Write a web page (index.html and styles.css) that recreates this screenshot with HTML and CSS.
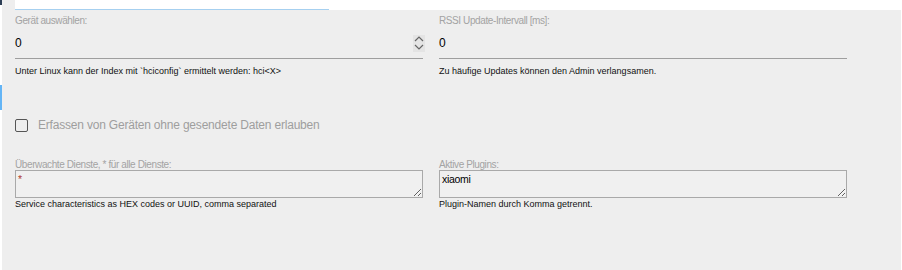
FILE: index.html
```html
<!DOCTYPE html>
<html lang="de">
<head>
    <meta charset="UTF-8">
    <meta name="viewport" content="width=device-width, initial-scale=1.0">
    <title>BLE Einstellungen</title>
    <link rel="stylesheet" href="styles.css">
</head>
<body>
    <div class="edge">
        <span class="edge-top"></span>
        <span class="edge-mark"></span>
    </div>

    <div class="page">
        <div class="prev">
            <span class="prev-pad"></span>
            <span class="prev-input"></span>
        </div>

        <div class="panel">
            <div class="grid">
                <div class="field">
                    <label class="label" for="device">Gerät auswählen:</label>
                    <div class="input">
                        <span class="value">0</span>
                        <span class="spinner">
                            <svg width="10" height="7" viewBox="0 0 10 7"><path d="M1 6 L5 2 L9 6" fill="none" stroke="#666" stroke-width="1.2"/></svg>
                            <svg width="10" height="7" viewBox="0 0 10 7"><path d="M1 1 L5 5 L9 1" fill="none" stroke="#666" stroke-width="1.2"/></svg>
                        </span>
                    </div>
                    <div class="help">Unter Linux kann der Index mit `hciconfig` ermittelt werden: hci&lt;X&gt;</div>
                </div>
                <div class="field">
                    <label class="label" for="rssi">RSSI Update-Intervall [ms]:</label>
                    <div class="input">
                        <span class="value">0</span>
                    </div>
                    <div class="help">Zu häufige Updates können den Admin verlangsamen.</div>
                </div>
            </div>

            <div class="check">
                <span class="box"></span>
                <span class="check-text">Erfassen von Geräten ohne gesendete Daten erlauben</span>
            </div>

            <div class="grid">
                <div class="field">
                    <label class="label small">Überwachte Dienste, * für alle Dienste:</label>
                    <textarea class="area star">*</textarea>
                    <div class="help tight">Service characteristics as HEX codes or UUID, comma separated</div>
                </div>
                <div class="field">
                    <label class="label small">Aktive Plugins:</label>
                    <textarea class="area">xiaomi</textarea>
                    <div class="help tight">Plugin-Namen durch Komma getrennt.</div>
                </div>
            </div>
        </div>
    </div>
</body>
</html>
```

FILE: styles.css
```css
html, body { margin: 0; padding: 0; }
body { display: flex; width: 902px; height: 270px; overflow: hidden; background: #fff; font-family: "Liberation Sans", Arial, sans-serif; }

.edge { width: 2px; display: flex; flex-direction: column; }
.edge-top { height: 5px; background: #2c3e55; }
.edge-mark { height: 25px; margin-top: 80px; background: #64b5f6; }

.page { width: 899px; display: flex; flex-direction: column; }
.prev { display: flex; height: 10px; }
.prev-pad { width: 13px; background: #eeeeee; }
.prev-input { width: 314px; height: 9px; border-bottom: 1px solid #a6d0f0; background: #fff; }

.panel { flex: 1; background: #eeeeee; padding: 4px 0 0 13px; }
.grid { display: grid; grid-template-columns: 408px 408px; column-gap: 16px; }
.field { display: flex; flex-direction: column; }

.label { font-size: 10px; line-height: 14px; letter-spacing: -0.4px; color: #a3a3a3; }
.label.small { line-height: 11px; }

.input { height: 30px; border-bottom: 1px solid #9e9e9e; display: flex; align-items: center; justify-content: space-between; }
.value { font-size: 12px; color: #000; }
.spinner { width: 12px; height: 17px; margin-right: -2px; background: #e4e4e4; display: flex; flex-direction: column; align-items: center; justify-content: center; gap: 2px; }
.spinner svg { display: block; }

.help { font-size: 9px; line-height: 12px; color: #111; margin-top: 6px; }
.help.tight { margin-top: 0; }

.check { display: flex; align-items: center; height: 20px; margin-top: 38px; }
.box { width: 11px; height: 11px; border: 1px solid #555; border-radius: 2px; }
.check-text { margin-left: 10px; font-size: 12px; letter-spacing: -0.2px; color: #9e9e9e; }

.area { margin: 0; height: 28px; box-sizing: border-box; border: 1px solid #a9a9a9; background: #f0f0f0; padding: 1px 2px; font-family: "Liberation Sans", Arial, sans-serif; font-size: 10.5px; letter-spacing: -0.3px; line-height: 14px; color: #000; }
.area.star { color: #b03a2e; }
.check + .grid { margin-top: 24px; }
```
